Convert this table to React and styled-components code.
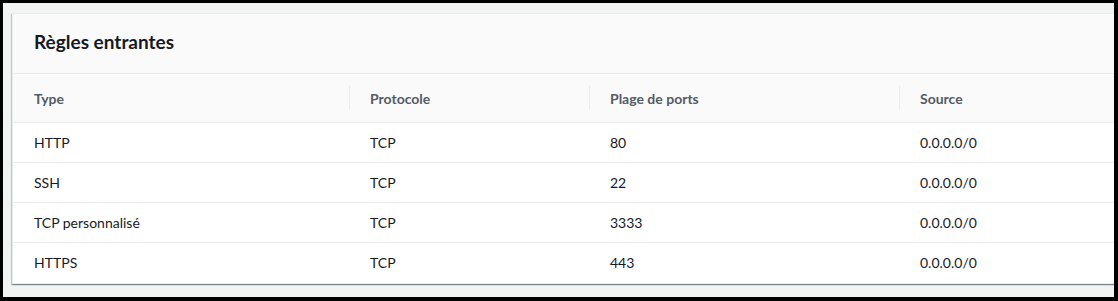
import React from 'react';
import styled, { createGlobalStyle } from 'styled-components';

const GlobalStyle = createGlobalStyle`
  html, body {
    margin: 0;
    padding: 0;
    background: #000;
  }
  body {
    font-family: Lato, "Liberation Sans", Arial, sans-serif;
    color: #16191f;
  }
`;

const Frame = styled.div`
  box-sizing: border-box;
  width: 1118px;
  height: 301px;
  border-style: solid;
  border-color: #000;
  border-width: 3px 4px 4px 3px;
  background: #f2f3f3;
  padding: 10px 0 0 9px;
  overflow: hidden;
`;

const Card = styled.section`
  margin-right: -2px;
  background: #fff;
  border: 1px solid #eaeded;
  box-shadow: 0 1px 1px 0 rgba(0, 28, 36, 0.3), 1px 1px 1px 0 rgba(0, 28, 36, 0.15),
    -1px 1px 1px 0 rgba(0, 28, 36, 0.15);
`;

const CardHeader = styled.header`
  display: flex;
  align-items: center;
  box-sizing: border-box;
  height: 60px;
  padding: 0 21px 3px;
  background: #fafafa;
  border-bottom: 1px solid #eaeded;
`;

const Title = styled.h2`
  margin: 0;
  font-size: 19px;
  font-weight: 700;
  line-height: 22px;
  color: #16191f;
`;

const Table = styled.div`
  display: grid;
  grid-template-columns: 336px 240px 310px 1fr;
`;

const Row = styled.div`
  display: contents;
`;

const HeadCell = styled.div`
  position: relative;
  display: flex;
  align-items: center;
  height: 48px;
  padding-left: 21px;
  background: #fafafa;
  border-bottom: 1px solid #eaeded;
  font-size: 14px;
  font-weight: 700;
  color: #545b64;
  &::before {
    content: '';
    display: ${(p) => (p.$first ? 'none' : 'block')};
    position: absolute;
    left: 0;
    top: 12px;
    bottom: 12px;
    width: 1px;
    background: #eaeded;
  }
`;

const Cell = styled.div`
  display: flex;
  align-items: center;
  height: 39px;
  padding-left: 21px;
  font-size: 14px;
  color: #16191f;
  background: #fff;
  border-bottom: 1px solid ${(p) => (p.$last ? 'transparent' : '#eaeded')};
`;

const columns = ['Type', 'Protocole', 'Plage de ports', 'Source'];

const rules = [
  ['HTTP', 'TCP', '80', '0.0.0.0/0'],
  ['SSH', 'TCP', '22', '0.0.0.0/0'],
  ['TCP personnalisé', 'TCP', '3333', '0.0.0.0/0'],
  ['HTTPS', 'TCP', '443', '0.0.0.0/0'],
];

export default function App() {
  return (
    <>
      <GlobalStyle />
      <Frame>
        <Card>
          <CardHeader>
            <Title>Règles entrantes</Title>
          </CardHeader>
          <Table>
            <Row>
              {columns.map((col, i) => (
                <HeadCell key={col} $first={i === 0}>
                  {col}
                </HeadCell>
              ))}
            </Row>
            {rules.map((rule, r) => (
              <Row key={rule[0]}>
                {rule.map((value, c) => (
                  <Cell key={c} $last={r === rules.length - 1}>
                    {value}
                  </Cell>
                ))}
              </Row>
            ))}
          </Table>
        </Card>
      </Frame>
    </>
  );
}
